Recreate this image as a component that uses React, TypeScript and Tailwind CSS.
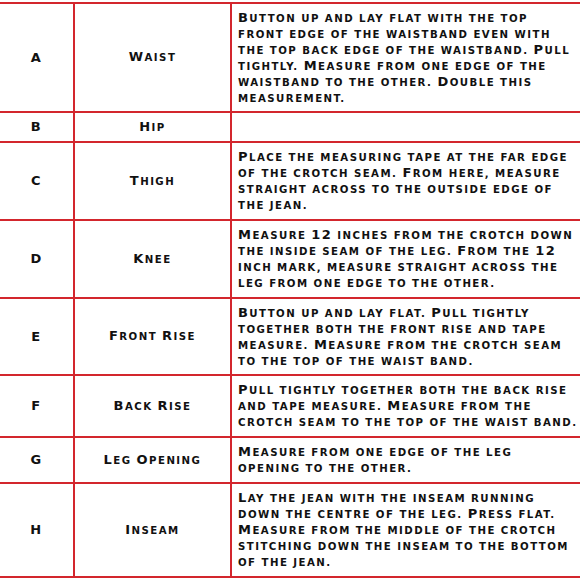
import React from "react";

type Row = { id: string; name: string; lines: string[]; h: number };

const rows: Row[] = [
  {
    id: "A",
    name: "Waist",
    h: 109,
    lines: [
      "Button up and lay flat with the top",
      "front edge of the waistband even with",
      "the top back edge of the waistband. Pull",
      "tightly. Measure from one edge of the",
      "waistband to the other. Double this",
      "measurement.",
    ],
  },
  { id: "B", name: "Hip", h: 30, lines: [] },
  {
    id: "C",
    name: "Thigh",
    h: 78,
    lines: [
      "Place the measuring tape at the far edge",
      "of the crotch seam. From here, measure",
      "straight across to the outside edge of",
      "the jean.",
    ],
  },
  {
    id: "D",
    name: "Knee",
    h: 78,
    lines: [
      "Measure 12 inches from the crotch down",
      "the inside seam of the leg. From the 12",
      "inch mark, measure straight across the",
      "leg from one edge to the other.",
    ],
  },
  {
    id: "E",
    name: "Front Rise",
    h: 77,
    lines: [
      "Button up and lay flat. Pull tightly",
      "together both the front rise and tape",
      "measure. Measure from the crotch seam",
      "to the top of the waist band.",
    ],
  },
  {
    id: "F",
    name: "Back Rise",
    h: 62,
    lines: [
      "Pull tightly together both the back rise",
      "and tape measure. Measure from the",
      "crotch seam to the top of the waist band.",
    ],
  },
  {
    id: "G",
    name: "Leg Opening",
    h: 46,
    lines: ["Measure from one edge of the leg", "opening to the other."],
  },
  {
    id: "H",
    name: "Inseam",
    h: 94,
    lines: [
      "Lay the jean with the inseam running",
      "down the centre of the leg. Press flat.",
      "Measure from the middle of the crotch",
      "stitching down the inseam to the bottom",
      "of the jean.",
    ],
  },
];

function SmallCaps({ text }: { text: string }) {
  const runs: { small: boolean; t: string }[] = [];
  for (const ch of text) {
    const small = /[a-z .,]/.test(ch);
    const last = runs[runs.length - 1];
    if (last && last.small === small) last.t += ch;
    else runs.push({ small, t: ch });
  }
  return (
    <>
      {runs.map((r, i) =>
        r.small ? (
          <span key={i} className="uppercase text-[10.2px]">
            {r.t}
          </span>
        ) : (
          <span key={i}>{r.t}</span>
        )
      )}
    </>
  );
}

export default function App() {
  return (
    <div className="w-[580px] h-[580px] bg-white overflow-hidden">
      <div
        className="mt-[2px] border-t-2 border-[#d3262d] text-[#111] font-bold text-[13px] leading-[16px] tracking-[1.45px] whitespace-nowrap"
        style={{ fontFamily: '"DejaVu Sans", "Liberation Sans", sans-serif' }}
      >
        {rows.map((r) => (
          <div
            key={r.id}
            className="grid grid-cols-[75px_157px_1fr] border-b-2 border-[#d3262d]"
            style={{ height: r.h }}
          >
            <div className="border-r-2 border-[#d3262d] flex items-center justify-center">
              {r.id}
            </div>
            <div className="border-r-2 border-[#d3262d] flex items-center justify-center">
              <div className="leading-[16px]">
                <SmallCaps text={r.name} />
              </div>
            </div>
            <div className="flex flex-col justify-center pl-[6px]">
              {r.lines.map((l, i) => (
                <div key={i} className="h-[16px] leading-[16px]">
                  <SmallCaps text={l} />
                </div>
              ))}
            </div>
          </div>
        ))}
      </div>
    </div>
  );
}
